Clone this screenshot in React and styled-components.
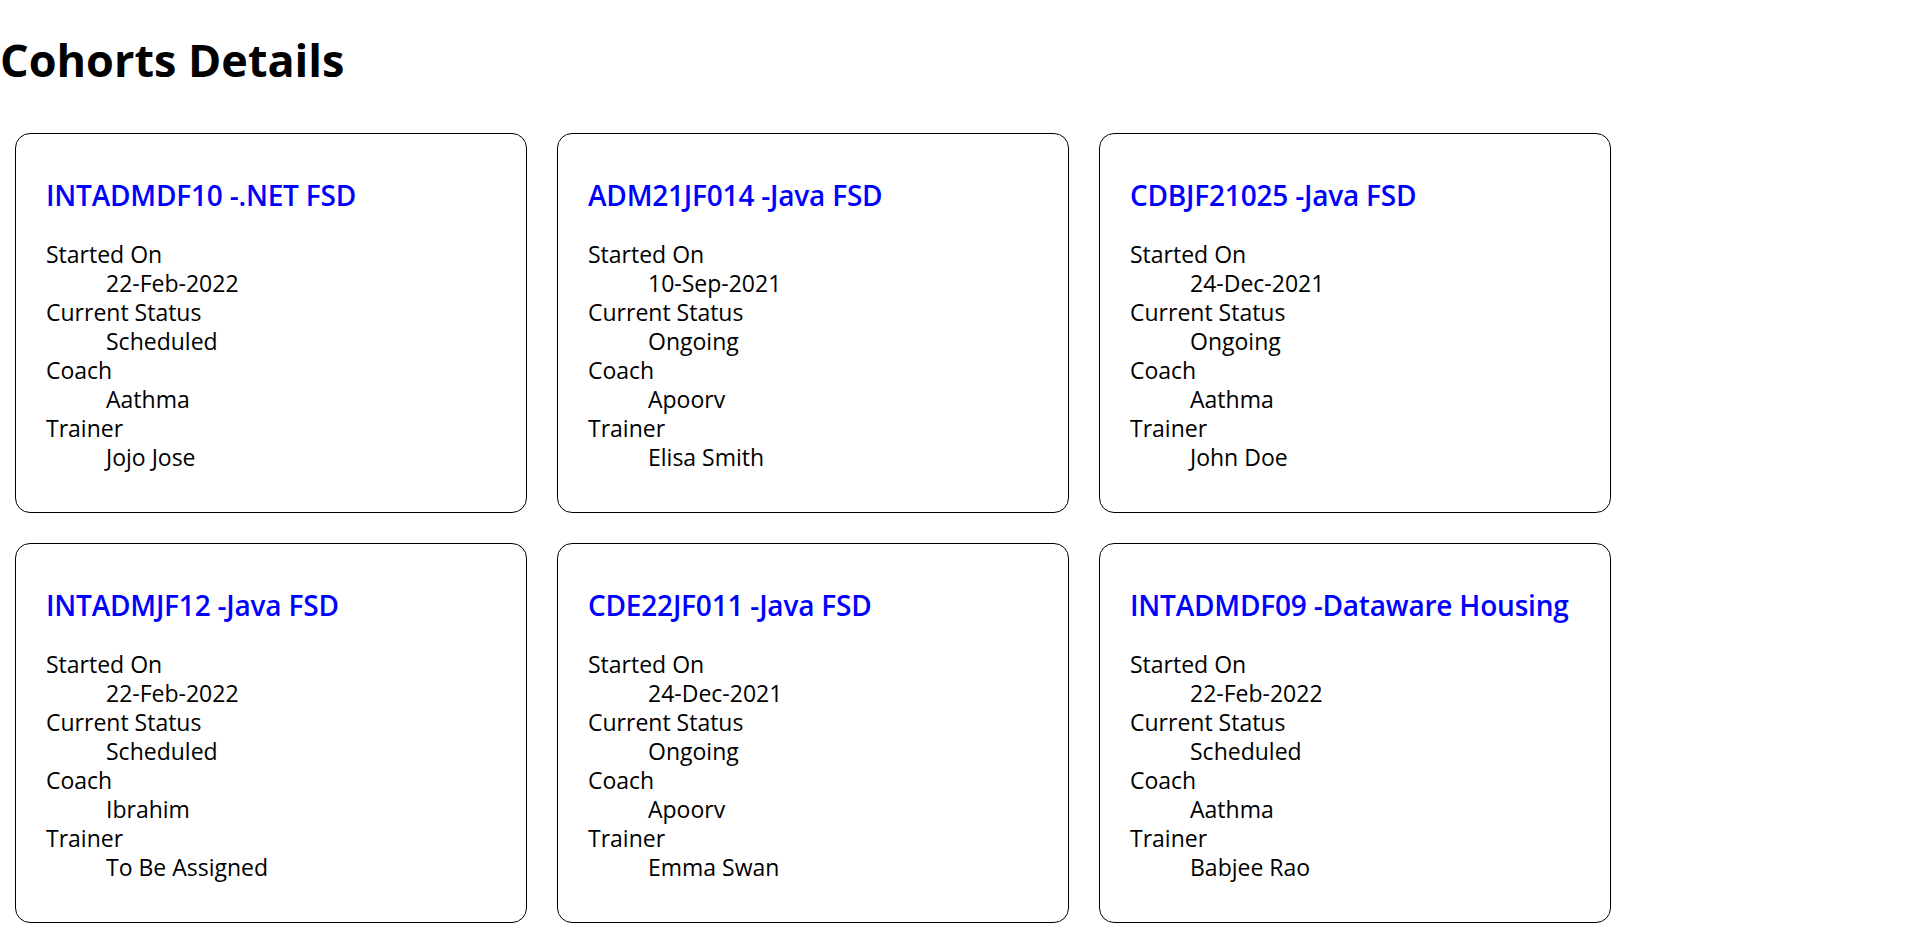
import React from "react";
import styled, { createGlobalStyle } from "styled-components";

const GlobalStyle = createGlobalStyle`
  html, body {
    margin: 0;
    padding: 0;
    background: #ffffff;
  }
  body {
    font-family: "Open Sans", "Noto Sans", sans-serif;
    color: #000000;
  }
  ::-webkit-scrollbar {
    width: 15px;
    background: #2b2b2b;
  }
  ::-webkit-scrollbar-track {
    background: #2b2b2b;
  }
  ::-webkit-scrollbar-thumb {
    background: #a3a3a3;
    border: 3px solid #2b2b2b;
    border-radius: 8px;
  }
  ::-webkit-scrollbar-button:single-button:vertical:decrement {
    height: 8px;
    background: #2b2b2b;
  }
`;

const Page = styled.div`
  display: flex;
  flex-direction: column;
  min-height: 1772px;
`;

const Heading = styled.h1`
  margin: 30px 0 28px;
  font-size: 45px;
  line-height: 60px;
  font-weight: 700;
`;

const CardGrid = styled.div`
  display: flex;
  flex-wrap: wrap;
  align-items: flex-start;
`;

const Card = styled.section`
  width: 450px;
  margin: 15px;
  padding: 30px;
  border: 1px solid #000000;
  border-radius: 15px;
  background: #ffffff;
`;

const CardTitle = styled.h3`
  margin: 16px 0 30px;
  font-size: 28px;
  line-height: 30px;
  font-weight: 600;
  color: #0000ff;
  white-space: nowrap;
  letter-spacing: -0.2px;
`;

const Details = styled.dl`
  margin: 0 0 10px;
  font-size: 23px;
  line-height: 29px;
`;

const Label = styled.dt`
  margin: 0;
`;

const Value = styled.dd`
  margin: 0 0 0 60px;
`;

const cohorts = [
  { code: "INTADMDF10", name: ".NET FSD", started: "22-Feb-2022", status: "Scheduled", coach: "Aathma", trainer: "Jojo Jose" },
  { code: "ADM21JF014", name: "Java FSD", started: "10-Sep-2021", status: "Ongoing", coach: "Apoorv", trainer: "Elisa Smith" },
  { code: "CDBJF21025", name: "Java FSD", started: "24-Dec-2021", status: "Ongoing", coach: "Aathma", trainer: "John Doe" },
  { code: "INTADMJF12", name: "Java FSD", started: "22-Feb-2022", status: "Scheduled", coach: "Ibrahim", trainer: "To Be Assigned" },
  { code: "CDE22JF011", name: "Java FSD", started: "24-Dec-2021", status: "Ongoing", coach: "Apoorv", trainer: "Emma Swan" },
  { code: "INTADMDF09", name: "Dataware Housing", started: "22-Feb-2022", status: "Scheduled", coach: "Aathma", trainer: "Babjee Rao" },
];

function CohortCard({ cohort }) {
  return (
    <Card>
      <CardTitle>
        {cohort.code} -{cohort.name}
      </CardTitle>
      <Details>
        <Label>Started On</Label>
        <Value>{cohort.started}</Value>
        <Label>Current Status</Label>
        <Value>{cohort.status}</Value>
        <Label>Coach</Label>
        <Value>{cohort.coach}</Value>
        <Label>Trainer</Label>
        <Value>{cohort.trainer}</Value>
      </Details>
    </Card>
  );
}

export default function App() {
  return (
    <>
      <GlobalStyle />
      <Page>
        <Heading>Cohorts Details</Heading>
        <CardGrid>
          {cohorts.map((c) => (
            <CohortCard key={c.code} cohort={c} />
          ))}
        </CardGrid>
      </Page>
    </>
  );
}
